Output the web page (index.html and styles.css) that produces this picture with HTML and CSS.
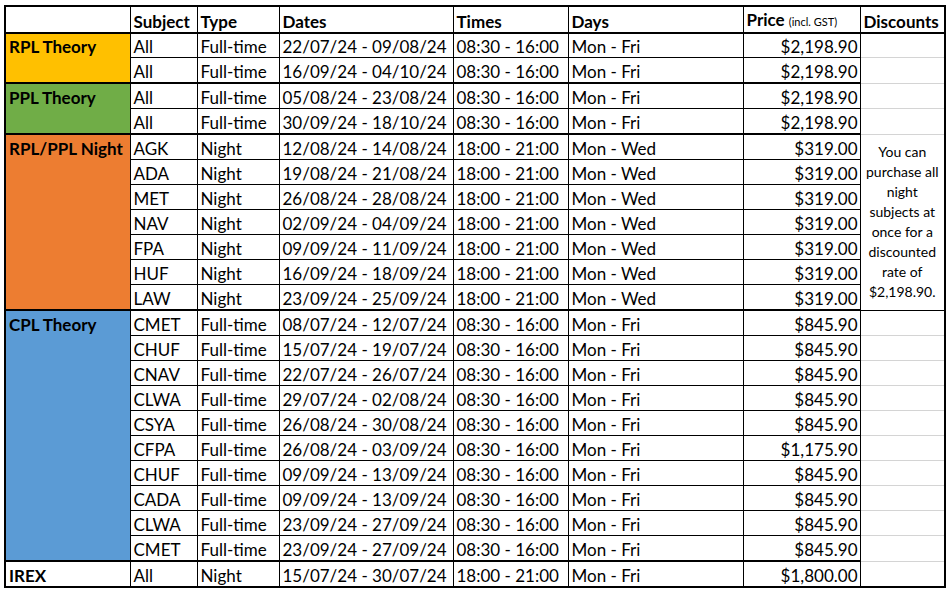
FILE: index.html
```html
<!DOCTYPE html>
<html>
<head>
<meta charset="utf-8">
<link rel="stylesheet" href="styles.css">
</head>
<body>
<table class="sched">
<colgroup>
<col class="c-grp"><col class="c-subj"><col class="c-type"><col class="c-dates"><col class="c-times"><col class="c-days"><col class="c-price"><col class="c-disc">
</colgroup>
<thead>
<tr class="head">
<th class="blank"></th><th>Subject</th><th>Type</th><th>Dates</th><th>Times</th><th>Days</th><th>Price <span class="gst">(incl. GST)</span></th><th class="hdisc">Discounts</th>
</tr>
</thead>
<tbody>
<tr class="first top">
<td class="label rpl" rowspan="2">RPL Theory</td><td>All</td><td>Full-time</td><td>22/07/24 - 09/08/24</td><td>08:30 - 16:00</td><td>Mon - Fri</td><td class="price">$2,198.90</td><td class="disc"></td>
</tr>
<tr>
<td>All</td><td>Full-time</td><td>16/09/24 - 04/10/24</td><td>08:30 - 16:00</td><td>Mon - Fri</td><td class="price">$2,198.90</td><td class="disc"></td>
</tr>
<tr class="first">
<td class="label ppl" rowspan="2">PPL Theory</td><td>All</td><td>Full-time</td><td>05/08/24 - 23/08/24</td><td>08:30 - 16:00</td><td>Mon - Fri</td><td class="price">$2,198.90</td><td class="disc"></td>
</tr>
<tr>
<td>All</td><td>Full-time</td><td>30/09/24 - 18/10/24</td><td>08:30 - 16:00</td><td>Mon - Fri</td><td class="price">$2,198.90</td><td class="disc"></td>
</tr>
<tr class="first">
<td class="label night" rowspan="7">RPL/PPL Night</td><td>AGK</td><td>Night</td><td>12/08/24 - 14/08/24</td><td>18:00 - 21:00</td><td>Mon - Wed</td><td class="price">$319.00</td>
<td class="note" rowspan="7">You can purchase all night subjects at once for a discounted rate of $2,198.90.</td>
</tr>
<tr><td>ADA</td><td>Night</td><td>19/08/24 - 21/08/24</td><td>18:00 - 21:00</td><td>Mon - Wed</td><td class="price">$319.00</td></tr>
<tr><td>MET</td><td>Night</td><td>26/08/24 - 28/08/24</td><td>18:00 - 21:00</td><td>Mon - Wed</td><td class="price">$319.00</td></tr>
<tr><td>NAV</td><td>Night</td><td>02/09/24 - 04/09/24</td><td>18:00 - 21:00</td><td>Mon - Wed</td><td class="price">$319.00</td></tr>
<tr><td>FPA</td><td>Night</td><td>09/09/24 - 11/09/24</td><td>18:00 - 21:00</td><td>Mon - Wed</td><td class="price">$319.00</td></tr>
<tr><td>HUF</td><td>Night</td><td>16/09/24 - 18/09/24</td><td>18:00 - 21:00</td><td>Mon - Wed</td><td class="price">$319.00</td></tr>
<tr><td>LAW</td><td>Night</td><td>23/09/24 - 25/09/24</td><td>18:00 - 21:00</td><td>Mon - Wed</td><td class="price">$319.00</td></tr>
<tr class="first">
<td class="label cpl" rowspan="10">CPL Theory</td><td>CMET</td><td>Full-time</td><td>08/07/24 - 12/07/24</td><td>08:30 - 16:00</td><td>Mon - Fri</td><td class="price">$845.90</td><td class="disc"></td>
</tr>
<tr><td>CHUF</td><td>Full-time</td><td>15/07/24 - 19/07/24</td><td>08:30 - 16:00</td><td>Mon - Fri</td><td class="price">$845.90</td><td class="disc"></td></tr>
<tr><td>CNAV</td><td>Full-time</td><td>22/07/24 - 26/07/24</td><td>08:30 - 16:00</td><td>Mon - Fri</td><td class="price">$845.90</td><td class="disc"></td></tr>
<tr><td>CLWA</td><td>Full-time</td><td>29/07/24 - 02/08/24</td><td>08:30 - 16:00</td><td>Mon - Fri</td><td class="price">$845.90</td><td class="disc"></td></tr>
<tr><td>CSYA</td><td>Full-time</td><td>26/08/24 - 30/08/24</td><td>08:30 - 16:00</td><td>Mon - Fri</td><td class="price">$845.90</td><td class="disc"></td></tr>
<tr><td>CFPA</td><td>Full-time</td><td>26/08/24 - 03/09/24</td><td>08:30 - 16:00</td><td>Mon - Fri</td><td class="price">$1,175.90</td><td class="disc"></td></tr>
<tr><td>CHUF</td><td>Full-time</td><td>09/09/24 - 13/09/24</td><td>08:30 - 16:00</td><td>Mon - Fri</td><td class="price">$845.90</td><td class="disc"></td></tr>
<tr><td>CADA</td><td>Full-time</td><td>09/09/24 - 13/09/24</td><td>08:30 - 16:00</td><td>Mon - Fri</td><td class="price">$845.90</td><td class="disc"></td></tr>
<tr><td>CLWA</td><td>Full-time</td><td>23/09/24 - 27/09/24</td><td>08:30 - 16:00</td><td>Mon - Fri</td><td class="price">$845.90</td><td class="disc"></td></tr>
<tr><td>CMET</td><td>Full-time</td><td>23/09/24 - 27/09/24</td><td>08:30 - 16:00</td><td>Mon - Fri</td><td class="price">$845.90</td><td class="disc"></td></tr>
<tr class="first">
<td class="label irex">IREX</td><td>All</td><td>Night</td><td>15/07/24 - 30/07/24</td><td>18:00 - 21:00</td><td>Mon - Fri</td><td class="price">$1,800.00</td><td class="disc"></td>
</tr>
</tbody>
</table>
</body>
</html>
```
FILE: styles.css
```css
html, body {
  margin: 0;
  padding: 0;
  background: #fff;
}
body {
  padding: 5px 0 0 4px;
  font-family: Lato, "Liberation Sans", sans-serif;
  color: #000;
}
.sched {
  border-collapse: collapse;
  table-layout: fixed;
  width: 941px;
  border: 2px solid #000;
  font-size: 17px;
}
.c-grp { width: 125px; }
.c-subj { width: 67px; }
.c-type { width: 82px; }
.c-dates { width: 174px; }
.c-times { width: 115px; }
.c-days { width: 175px; }
.c-price { width: 117px; }
.c-disc { width: 85px; }

.sched th, .sched td {
  border: 1px solid #000;
  padding: 3px 3px 0;
  height: 21px;
  line-height: 21px;
  white-space: nowrap;
  overflow: hidden;
  text-align: left;
  vertical-align: bottom;
}
.sched th {
  font-weight: bold;
  border-top: 2px solid #000;
  border-bottom: 2px solid #000;
  height: 20px;
  line-height: 20px;
}
.sched .gst {
  font-weight: normal;
  font-size: 11px;
}
.sched tr.first td {
  border-top: 2px solid #000;
}
.sched tr.top td {
  height: 20px;
  line-height: 20px;
}
.sched td.label {
  font-weight: bold;
  vertical-align: top;
}
.rpl { background: #ffc000; }
.ppl { background: #70ad47; }
.night { background: #ed7d31; }
.cpl { background: #5b9bd5; }
.irex { background: #fff; }

.sched td.price {
  text-align: right;
  padding-right: 2px;
}
.sched td.disc,
.sched tr.first td.disc {
  border-top: 1px solid #d4d4d4;
  border-bottom: 1px solid #d4d4d4;
}
.sched tr.first td.note {
  border-top: 1px solid #000;
}
.sched td.note {
  border-bottom: 1px solid #000;
  white-space: normal;
  text-align: center;
  vertical-align: middle;
  font-size: 14px;
  line-height: 20px;
  padding: 0 4px;
}
```
